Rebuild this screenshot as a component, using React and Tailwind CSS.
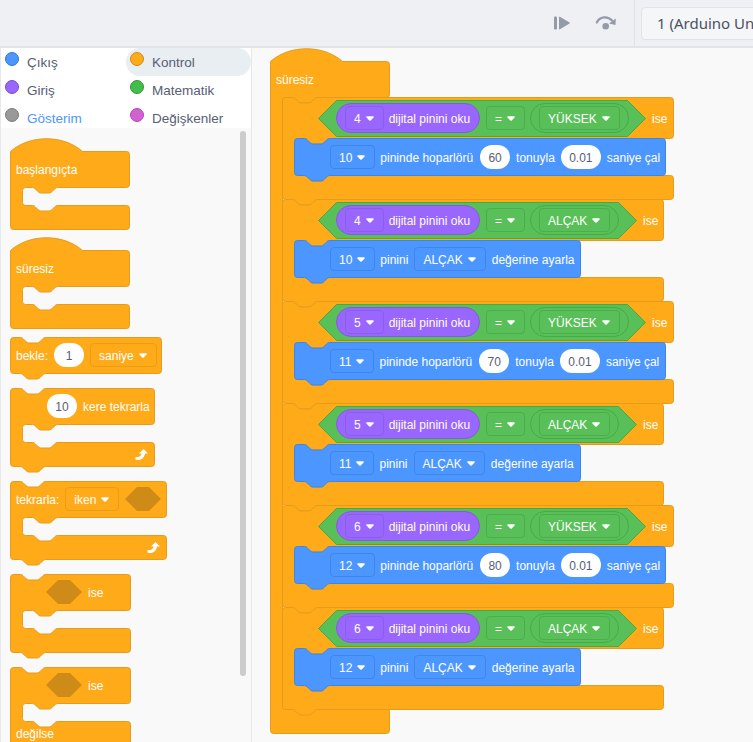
const NOTCH = "c1.4,0 2,0.7 2.8,1.4 l2.7,2.7 c0.7,0.7 1.4,1.4 2.8,1.4 h8.4 c1.4,0 2,-0.7 2.8,-1.4 l2.7,-2.7 c0.7,-0.7 1.4,-1.4 2.8,-1.4";
const NOTCH_BACK = "c-1.4,0 -2,0.7 -2.8,1.4 l-2.7,2.7 c-0.7,0.7 -1.4,1.4 -2.8,1.4 h-8.4 c-1.4,0 -2,-0.7 -2.8,-1.4 l-2.7,-2.7 c-0.7,-0.7 -1.4,-1.4 -2.8,-1.4";
const ARM = 12;
const HAT = 13;

const stackPath = (w, h) =>
  `M0,3 a3,3 0 0 1 3,-3 H10 ${NOTCH} H${w - 4} a3,3 0 0 1 3,3 V${h - 3} a3,3 0 0 1 -3,3 H35 ${NOTCH_BACK} H3 a3,3 0 0 1 -3,-3 Z`;

// C shaped block, optionally with a hat on top and no bump below
const cPath = ({ w, head, inner, foot, hat, bump }) => {
  const t = hat ? HAT : 0;
  const top = hat
    ? `M0,${t + 3} V${t} c19,-17 53,-17 72,0 H${w - 4}`
    : `M0,3 a3,3 0 0 1 3,-3 H10 ${NOTCH} H${w - 4}`;
  const a = t + head;
  const b = a + inner;
  const c = b + foot;
  return `${top} a3,3 0 0 1 3,3 V${a - 3} a3,3 0 0 1 -3,3 H${ARM + 35} ${NOTCH_BACK} H${ARM + 3} a3,3 0 0 0 -3,3 V${b - 3} a3,3 0 0 0 3,3 H${ARM + 10} ${NOTCH} H${w - 4} a3,3 0 0 1 3,3 V${c - 3} a3,3 0 0 1 -3,3 ${bump ? `H35 ${NOTCH_BACK}` : ""} H3 a3,3 0 0 1 -3,-3 Z`;
};

const Shape = ({ d, fill, stroke }) => (
  <svg className="absolute left-0 top-0 overflow-visible" width="1" height="1">
    <path d={d} fill={fill} stroke={stroke} transform="translate(0.5 0.5)" />
  </svg>
);

// block text sits 1px under the centre line
const Txt = ({ className = "", children }) => <span className={`pt-[2px] ${className}`}>{children}</span>;

const Caret = () => (
  <svg width="8" height="5" viewBox="0 0 8 5" className="shrink-0">
    <path d="M1,0.2 H7 C7.8,0.2 8.1,1 7.6,1.5 L4.7,4.4 C4.3,4.8 3.7,4.8 3.3,4.4 L0.4,1.5 C-0.1,1 0.2,0.2 1,0.2 Z" fill="#fff" />
  </svg>
);

const Field = ({ label, tone }) => (
  <span className={`flex h-[24px] shrink-0 items-center gap-[5px] rounded-[4px] border pl-[8px] pr-[9px] text-white ${tone}`}>
    <Txt>{label}</Txt>
    <Caret />
  </span>
);

const Input = ({ value, width }) => (
  <span className={`flex h-[24px] shrink-0 items-center justify-center rounded-full bg-white text-[#575e75] ${width}`}>
    <Txt>{value}</Txt>
  </span>
);

const ORANGE = "border-[#ea9d16]";
const BLUE = "border-[#4085ea]";
const GREEN = "border-[#4bae4b]";
const PURPLE = "border-[#8a5fe8]";

const Stack = ({ w, h = 37, fill = "#4c97ff", stroke = "#3d85e6", className, children }) => (
  <div className="relative" style={{ width: w, height: h }}>
    <Shape d={stackPath(w, h)} fill={fill} stroke={stroke} />
    <div className={`relative flex h-full items-center whitespace-nowrap text-white ${className}`}>{children}</div>
  </div>
);

const CBlock = ({ w, head = 36, inner = 18, foot = 24, hat, bump, headClass, footer, children }) => (
  <div className="relative" style={{ width: w, paddingTop: hat ? HAT : 0 }}>
    <Shape d={cPath({ w, head, inner, foot, hat, bump })} fill="#ffab19" stroke="#e49c1c" />
    <div className={`relative flex items-center whitespace-nowrap text-white ${headClass}`} style={{ height: head }}>
      {children?.[0]}
    </div>
    <div className="relative ml-[12px]" style={{ height: inner }}>
      {children?.[1]}
    </div>
    <div className="relative flex items-center whitespace-nowrap text-white" style={{ height: foot }}>
      {footer}
    </div>
  </div>
);

const EmptyHex = () => (
  <svg width="36" height="24" viewBox="0 0 36 24" className="shrink-0">
    <path d="M12,0 H24 L36,12 L24,24 H12 L0,12 Z" fill="#cf8b17" />
  </svg>
);

const RepeatArrow = () => (
  <svg width="13" height="12" viewBox="0 0 13 12" className="shrink-0">
    <path d="M0.5,8 C3.5,8.5 6,7.5 6.5,4.5 L4,4.5 L8.5,0 L13,4.5 L10,4.5 C9.5,9 5,12.5 0.5,10.5 Z" fill="#fff" />
  </svg>
);

const Condition = ({ pin, level, w }) => (
  <div className="relative h-[36px]" style={{ width: w }}>
    <Shape d={`M18,0 H${w - 19} L${w - 1},18 L${w - 19},36 H18 L0,18 Z`} fill="#59c059" stroke="#46ab46" />
    <div className="relative flex h-full items-center pl-[18px]">
      <div className="flex h-[30px] w-[144px] shrink-0 items-center gap-[5px] rounded-full border border-[#855cd6] bg-[#9966ff] pl-[8px]">
        <Field label={pin} tone={PURPLE} />
        <Txt>dijital pinini oku</Txt>
      </div>
      <div className="ml-[6px]">
        <Field label="=" tone={GREEN} />
      </div>
      <div className="ml-[5px] flex h-[30px] shrink-0 items-center rounded-full border border-[#46ab46] pl-[8px] pr-[8px]">
        <Field label={level} tone={GREEN} />
      </div>
    </div>
  </div>
);

const Tone = ({ digital, freq }) => (
  <Stack w={372} className="pl-[36px] pt-[1px]">
    <Field label={digital} tone={BLUE} />
    <Txt className="ml-[5px]">pininde hoparlörü</Txt>
    <span className="ml-[7px]"><Input value={freq} width="w-[30px]" /></span>
    <Txt className="ml-[6px]">tonuyla</Txt>
    <span className="ml-[6px]"><Input value="0.01" width="w-[40px]" /></span>
    <Txt className="ml-[6px]">saniye çal</Txt>
  </Stack>
);

const SetPin = ({ digital }) => (
  <Stack w={287} className="pl-[36px] pt-[1px]">
    <Field label={digital} tone={BLUE} />
    <Txt className="ml-[5px]">pinini</Txt>
    <span className="ml-[6px]"><Field label="ALÇAK" tone={BLUE} /></span>
    <Txt className="ml-[6px]">değerine ayarla</Txt>
  </Stack>
);

const PinBlock = ({ pin, digital, freq, high }) => (
  <CBlock w={high ? 392 : 382} head={41} inner={37} foot={24} bump headClass="pl-[36px] pt-[1px]">
    {[
      <>
        <Condition pin={pin} level={high ? "YÜKSEK" : "ALÇAK"} w={high ? 328 : 319} />
        <Txt className="ml-[6px]">ise</Txt>
      </>,
      high ? <Tone digital={digital} freq={freq} /> : <SetPin digital={digital} />,
    ]}
  </CBlock>
);

const scripts = [
  { pin: 4, digital: 10, freq: 60 },
  { pin: 5, digital: 11, freq: 70 },
  { pin: 6, digital: 12, freq: 80 },
];

const categories = [
  { name: "Çıkış", dot: "bg-[#4c97ff] border-[#3373cc]" },
  { name: "Kontrol", dot: "bg-[#ffab19] border-[#cf8b17]", active: true },
  { name: "Giriş", dot: "bg-[#9966ff] border-[#774dcb]" },
  { name: "Matematik", dot: "bg-[#40bf4a] border-[#389438]" },
  { name: "Gösterim", dot: "bg-[#999999] border-[#7a7a7a]", link: true },
  { name: "Değişkenler", dot: "bg-[#cf63cf] border-[#bd42bd]" },
];

const App = () => {
  return (
    <div className="flex h-[742px] w-[753px] flex-col overflow-hidden bg-[#f9f9f9] font-['Liberation_Sans',sans-serif] text-[12px]">
      {/* Toolbar */}
      <div className="flex h-[48px] shrink-0 items-center justify-end border-b-2 border-[#e2e4e8] bg-[#eff0f3]">
        <svg width="18" height="16" viewBox="0 0 18 16" className="mr-[24px]">
          <rect x="1" y="1.5" width="3" height="13" rx="1" fill="#949ba8" />
          <path d="M6.5,2 L16.5,8 L6.5,14 Z" fill="#949ba8" stroke="#949ba8" strokeLinejoin="round" />
        </svg>
        <svg width="22" height="16" viewBox="0 0 22 16" className="mr-[17px]">
          <path d="M1.8,7.5 C4.5,1.5 12.5,0.5 17,5.5" fill="none" stroke="#949ba8" strokeWidth="2.2" strokeLinecap="round" />
          <path d="M20.8,3.5 L20.5,10 L14,8.5 Z" fill="#949ba8" />
          <circle cx="10.7" cy="11.3" r="3.3" fill="#949ba8" />
        </svg>
        <div className="flex h-full w-[119px] shrink-0 items-center overflow-hidden border-l border-[#dfe1e5] pl-[6px]">
          <div className="flex h-[33px] w-[200px] shrink-0 items-center rounded-[4px] border border-[#e0e3e8] bg-[#f5f6f8] pl-[15px] font-['Noto_Sans',sans-serif] text-[15px] text-[#4b5162]">
            1 (Arduino Uno)
          </div>
        </div>
      </div>

      <div className="flex min-h-0 flex-1">
        {/* Left panel */}
        <div className="flex w-[252px] shrink-0 flex-col border-x border-[#e6e8ec]">
          <div className="grid h-[80px] shrink-0 grid-cols-[125px_125px] grid-rows-[28px_28px_28px] bg-white text-[13.5px] text-[#575e75]">
            {categories.map((c) => (
              <div
                key={c.name}
                className={`flex items-center rounded-full pl-[4px] ${c.active ? "bg-[#e9eef2]" : ""}`}
              >
                <span className={`mb-[6px] mr-[8px] h-[14px] w-[14px] shrink-0 rounded-full border ${c.dot}`} />
                <span className={`mt-[3px] ${c.link ? "text-[#4c97ff]" : ""}`}>{c.name}</span>
              </div>
            ))}
          </div>

          {/* Palette */}
          <div className="relative min-h-0 flex-1 overflow-hidden pl-[9px] pt-[10px]">
            <div className="absolute left-[239px] top-[3px] h-[545px] w-[6px] rounded-full bg-[#cccccc]" />
            <div className="flex flex-col items-start gap-[15px]">
              <CBlock w={120} hat headClass="pl-[6px]">
                {[<Txt>başlangıçta</Txt>]}
              </CBlock>
              <div className="-mt-[7px]">
                <CBlock w={120} hat headClass="pl-[6px]">
                  {[<Txt>süresiz</Txt>]}
                </CBlock>
              </div>
              <div className="-mt-[6px]">
                <Stack w={152} h={36} fill="#ffab19" stroke="#e49c1c" className="pl-[6px]">
                  <Txt>bekle:</Txt>
                  <span className="ml-[6px]"><Input value="1" width="w-[30px]" /></span>
                  <span className="ml-[6px]"><Field label="saniye" tone={ORANGE} /></span>
                </Stack>
              </div>
              <CBlock
                w={145}
                bump
                headClass="pl-[37px]"
                footer={<div className="ml-auto mr-[7px] mt-[1px]"><RepeatArrow /></div>}
              >
                {[
                  <>
                    <Input value="10" width="w-[30px]" />
                    <Txt className="ml-[6px]">kere tekrarla</Txt>
                  </>,
                ]}
              </CBlock>
              <CBlock
                w={157}
                bump
                headClass="pl-[6px]"
                footer={<div className="ml-auto mr-[7px] mt-[1px]"><RepeatArrow /></div>}
              >
                {[
                  <>
                    <Txt>tekrarla:</Txt>
                    <span className="ml-[6px]"><Field label="iken" tone={ORANGE} /></span>
                    <span className="ml-[6px]"><EmptyHex /></span>
                  </>,
                ]}
              </CBlock>
              <CBlock w={121} bump headClass="pl-[36px]">
                {[
                  <>
                    <EmptyHex />
                    <Txt className="ml-[6px]">ise</Txt>
                  </>,
                ]}
              </CBlock>
              <CBlock w={121} bump foot={24} inner={18} headClass="pl-[36px]" footer={<Txt className="ml-[6px]">değilse</Txt>}>
                {[
                  <>
                    <EmptyHex />
                    <Txt className="ml-[6px]">ise</Txt>
                  </>,
                ]}
              </CBlock>
            </div>
          </div>
        </div>

        {/* Workspace */}
        <div className="min-w-0 flex-1 pl-[18px]">
          <CBlock w={120} hat head={36} inner={611} foot={25} headClass="pl-[6px]">
            {[
              <Txt>süresiz</Txt>,
              scripts.map((s) => (
                <div key={s.pin}>
                  <PinBlock {...s} high />
                  <PinBlock {...s} />
                </div>
              )),
            ]}
          </CBlock>
        </div>
      </div>
    </div>
  );
};

export default App;
